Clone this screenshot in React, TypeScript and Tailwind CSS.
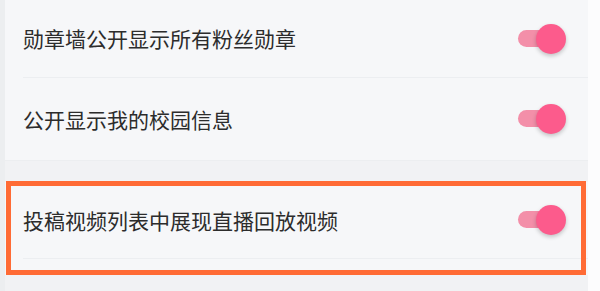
import React from 'react';

const font = { fontFamily: '"Noto Sans CJK SC", "Noto Sans", sans-serif' };

function Toggle() {
  return (
    <div className="relative w-[48px] h-[30px] shrink-0">
      <div className="absolute left-0 top-[6px] w-[38px] h-[17px] rounded-full bg-[#f38fa9]" />
      <div className="absolute right-0 top-0 w-[30px] h-[30px] rounded-full bg-[#fc5b8c] shadow-[0_2px_4px_rgba(0,0,0,0.22)]" />
    </div>
  );
}

function Row({ label, height, divider = true }: { label: string; height: string; divider?: boolean }) {
  return (
    <div className={`pl-[18px] ${height}`}>
      <div className={`h-full flex items-center justify-between pr-[22px] ${divider ? 'border-b border-[#eceef1]' : ''}`}>
        <span className="text-[21px] leading-none text-[#2c2c2c]" style={font}>
          {label}
        </span>
        <Toggle />
      </div>
    </div>
  );
}

export default function App() {
  return (
    <div className="relative w-[600px] h-[291px] overflow-hidden flex bg-[#f1f2f4]">
      <div className="w-[5px] bg-[#eceef0]" />
      <div className="flex-1 flex flex-col">
        <div className="bg-[#f6f7f9] border-b border-[#eceef0]">
          <Row label="勋章墙公开显示所有粉丝勋章" height="h-[78px]" />
          <Row label="公开显示我的校园信息" height="h-[82px]" divider={false} />
        </div>
        <div className="h-[21px]" />
        <div className="bg-[#f6f7f9]">
          <Row label="投稿视频列表中展现直播回放视频" height="h-[77px]" />
          <div className="h-[16px]" />
        </div>
      </div>
      <div className="w-[12px] bg-[#fcfcfd]" />

      {/* highlight box */}
      <div className="absolute left-[6px] top-[181px] w-[580px] h-[94px] border-[5px] border-[#ff6b35]" />
    </div>
  );
}
